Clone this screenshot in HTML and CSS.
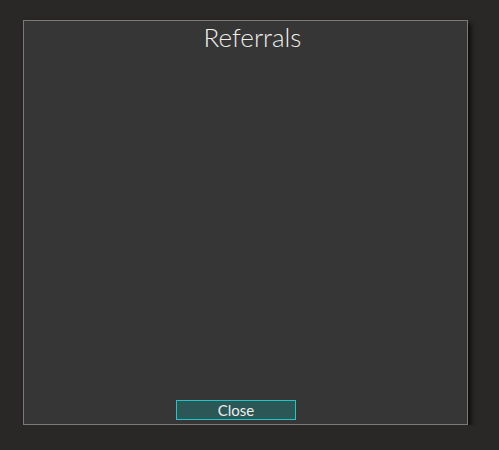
FILE: index.html
```html
<!DOCTYPE html>
<html lang="en">

<head>
    <meta charset="UTF-8">
    <meta name="viewport" content="width=device-width, initial-scale=1.0">
    <title>Referrals</title>
    <link rel="stylesheet" href="styles.css">
</head>

<body>
    <div class="dialog">
        <h2 class="dialog-title">Referrals</h2>
        <div class="dialog-body"></div>
        <div class="dialog-footer">
            <button type="button" class="close-btn">Close</button>
        </div>
    </div>
</body>

</html>
```

FILE: styles.css
```css
body {
    background: #292826;
    color: #eee;
    font-family: Lato, "Open Sans", sans-serif;
    margin: 0;
    padding: 20px 0 0 23px;
}

.dialog {
    width: 443px;
    height: 403px;
    background: #363636;
    border: 1px solid #7a7a7a;
    box-shadow: 3px 3px 5px rgba(0, 0, 0, 0.7);
    display: flex;
    flex-direction: column;
}

.dialog-title {
    margin: 0;
    padding-left: 14px;
    text-align: center;
    font-weight: 300;
    font-size: 26px;
    line-height: 32px;
    color: #eeeeea;
}

.dialog-body {
    flex: 1;
}

.dialog-footer {
    padding: 0 0 4px 152px;
}

.close-btn {
    width: 120px;
    height: 20px;
    padding: 0;
    border: 1px solid #22c6c6;
    background: #2b5756;
    color: #eee;
    font-family: Lato, "Open Sans", sans-serif;
    font-size: 15px;
    line-height: 18px;
    display: block;
}
```
